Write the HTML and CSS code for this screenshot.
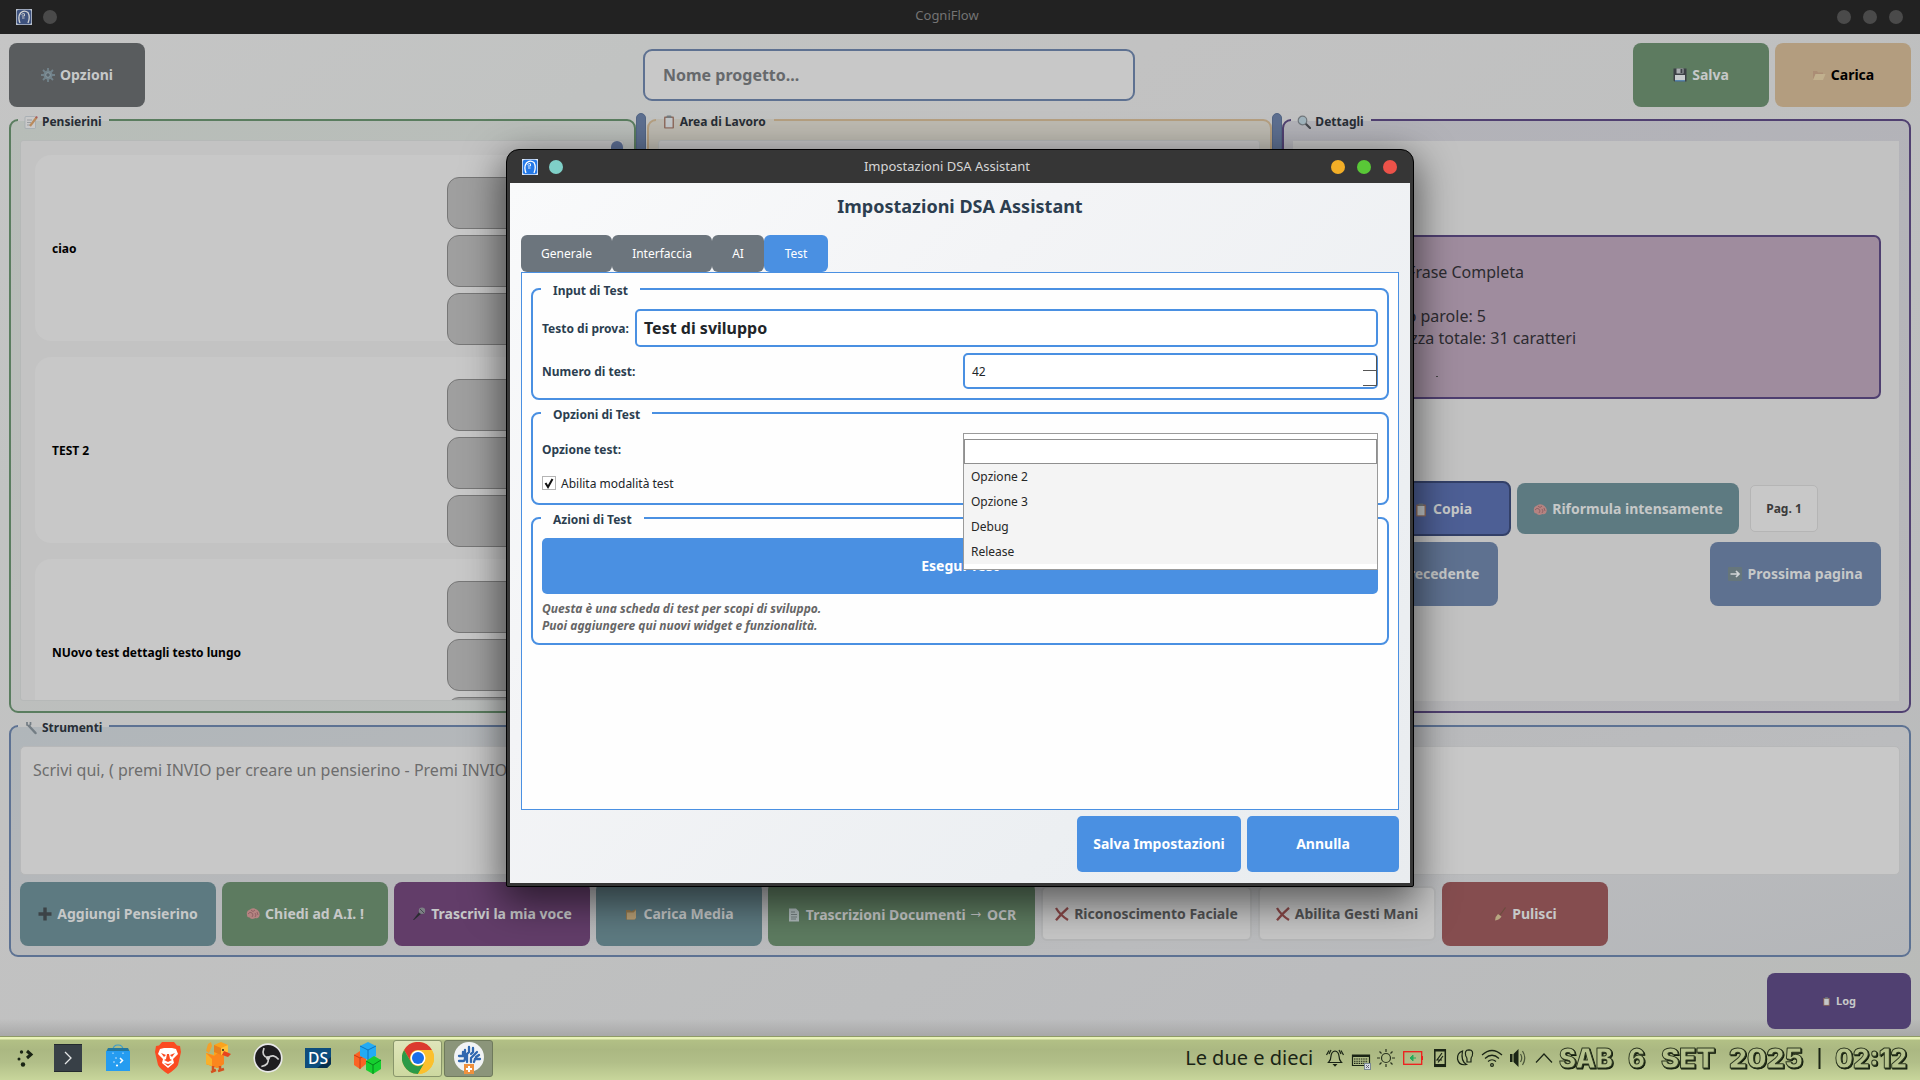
FILE: index.html
```html
<!DOCTYPE html>
<html lang="it">
<head>
<meta charset="utf-8">
<title>CogniFlow</title>
<link rel="stylesheet" href="styles.css">
</head>
<body>
<svg class="defs" aria-hidden="true">
  <symbol id="head" viewBox="0 0 16 16"><rect width="16" height="16" fill="#dfe9f8"/><rect x=".8" y=".8" width="14.400" height="14.400" rx="2" fill="currentColor"/><path d="M4 14Q1.500 8 4.500 4Q8 .5 12 3.500Q14.500 8 12 14" fill="none" stroke="#fff" stroke-width="1.300"/><path d="M5.500 5.500Q7 4 8.500 4.800V7H5.800M6 9H8.500" stroke="#fff" stroke-width=".9" fill="none"/></symbol>
  <symbol id="gear" viewBox="0 0 14 14"><g stroke="#72838b" stroke-width="1.800"><path d="M7 0V14M0 7H14M2 2L12 12M12 2L2 12"/></g><circle cx="7" cy="7" r="4.500" fill="#72838b"/><circle cx="7" cy="7" r="2.300" fill="#59636a" stroke="#8a9aa1"/></symbol>
  <symbol id="note" viewBox="0 0 14 14"><rect x="1" y="1.500" width="10.500" height="12" rx="1" fill="#c9c9c9" stroke="#9da6ad" stroke-width=".7"/><path d="M3 5H8M3 7.500H7M3 10H6" stroke="#8d9297" stroke-width=".8"/><path d="M6 11L12.500 2.500" stroke="#b98b5d" stroke-width="2.200"/><path d="M12 3L13 1.500" stroke="#a95b5b" stroke-width="2.200"/></symbol>
  <symbol id="clip" viewBox="0 0 14 14"><rect x="2" y="1.500" width="10" height="12" rx="1" fill="#8f6c5e"/><rect x="3.500" y="3" width="7" height="9.300" fill="#c3c7c9"/><rect x="4.500" y=".5" width="5" height="2.500" rx="1" fill="#747b7f"/></symbol>
  <symbol id="lens" viewBox="0 0 14 14"><path d="M8 8L13 13" stroke="#45484d" stroke-width="2.200" stroke-linecap="round"/><circle cx="5.500" cy="5.500" r="4.300" fill="#a0b4bd" stroke="#71777c" stroke-width="1.200"/></symbol>
  <symbol id="floppy" viewBox="0 0 14 14"><path d="M.5.500H13.500V13.500H1.500L.5 12.500Z" fill="#3c4146"/><rect x="3.500" y=".5" width="7" height="5" fill="#a9adb0"/><rect x="7.500" y="1" width="2" height="4" fill="#3c4146"/><rect x="2" y="7" width="10" height="6" fill="#c8ccce"/><rect x="2" y="12" width="10" height="1.500" fill="#5a87ad"/></symbol>
  <symbol id="folderopen" viewBox="0 0 14 14"><path d="M1 12V3H5L6 4.500H11V6H4Z" fill="#ab8d75"/><path d="M3.500 6H13.500L11 12H1Z" fill="#c1b08e"/></symbol>
  <symbol id="folder" viewBox="0 0 14 14"><path d="M2 12.500V3H6L7 4.500L12 2V11L10.500 12.500Z" fill="#94794e"/><path d="M3 5.500H9.500L12 3V11L10.500 12.500H3Z" fill="#b9a076"/></symbol>
  <symbol id="brain" viewBox="0 0 14 14"><path d="M1 8Q0 4 4 2.500Q8 0 11.500 3Q15 6 13 10Q11 12 9.500 11Q5 13 3.500 10.500Q1 10.500 1 8Z" fill="#b58381"/><path d="M2 7Q4 4 6 6Q8 8 6 10M5 3Q7 6 9 3M9 6Q11 8 9 10M11 5L12 8" fill="none" stroke="#8b5f62" stroke-width=".9"/></symbol>
  <symbol id="arrow" viewBox="0 0 14 14"><rect width="14" height="14" rx="1" fill="#66767b"/><path d="M2.500 7H11M8 4L11 7L8 10" stroke="#d2d5d7" stroke-width="1.700" fill="none"/></symbol>
  <symbol id="wrench" viewBox="0 0 14 14"><path d="M5 5L11.500 12" stroke="#737d84" stroke-width="2.500" stroke-linecap="round"/><path d="M3 1V4L5 5L6.500 3.500V1M5 5" stroke="#737d84" stroke-width="1.700" fill="none"/></symbol>
  <symbol id="plus" viewBox="0 0 14 14"><path d="M7 .5V13.500M.5 7H13.500" stroke="#3c4347" stroke-width="3.400"/></symbol>
  <symbol id="mic" viewBox="0 0 14 14"><path d="M1 13L8 4L10 6L2 13Z" fill="#292c30"/><circle cx="10" cy="3.700" r="3.200" fill="#7c7f84"/><path d="M8 2L12 6" stroke="#464950"/></symbol>
  <symbol id="page" viewBox="0 0 14 14"><path d="M2 .5H9L12 3.500V13.500H2Z" fill="#aebabb"/><path d="M4 4H8M4 6.500H10M4 9H10M4 11H9" stroke="#6d787b" stroke-width=".9"/></symbol>
  <symbol id="cross" viewBox="0 0 14 14"><path d="M1 1Q5 8 13 13M13 .8Q7 6 1 13.200" stroke="#8a4848" stroke-width="2.300" fill="none"/></symbol>
  <symbol id="broom" viewBox="0 0 14 14"><path d="M12.500 .5L7 8" stroke="#6a4d3d" stroke-width="1.200"/><path d="M5 7L8.500 9.500Q6.500 13 2 13.500Q2.500 9 5 7Z" fill="#b7a681"/></symbol>
</svg>

<header class="titlebar">
  <span class="tb-side"><svg class="appicon dim"><use href="#head"/></svg><i class="dot"></i></span>
  <span class="tb-title">CogniFlow</span>
  <span class="tb-side end"><i class="dot"></i><i class="dot"></i><i class="dot"></i></span>
</header>

<main class="app">
  <div class="toolbar">
    <button class="btn gray w136"><svg class="ic"><use href="#gear"/></svg>Opzioni</button>
    <div class="project">Nome progetto...</div>
    <div class="pair">
      <button class="btn green w136"><svg class="ic"><use href="#floppy"/></svg>Salva</button>
      <button class="btn sand w136"><svg class="ic"><use href="#folderopen"/></svg>Carica</button>
    </div>
  </div>

  <div class="columns">
    <fieldset class="panel pensierini">
      <legend><svg class="ic"><use href="#note"/></svg>Pensierini</legend>
      <div class="scroll">
        <div class="cards">
          <article class="card"><p>ciao</p><div class="acts"><b></b><b></b><b></b></div></article>
          <article class="card"><p>TEST 2</p><div class="acts"><b></b><b></b><b></b></div></article>
          <article class="card"><p>NUovo test dettagli testo lungo</p><div class="acts"><b></b><b></b><b></b></div></article>
        </div>
        <div class="handle"></div>
      </div>
    </fieldset>
    <div class="splitter"></div>
    <fieldset class="panel lavoro">
      <legend><svg class="ic"><use href="#clip"/></svg>Area di Lavoro</legend>
      <div class="scroll"></div>
    </fieldset>
    <div class="splitter"></div>
    <fieldset class="panel dettagli">
      <legend><svg class="ic"><use href="#lens"/></svg>Dettagli</legend>
      <div class="details">
        <div class="info">
          <p class="l1">Frase Completa</p>
          <p class="l2">Numero parole: 5</p>
          <p class="l3">Lunghezza totale: 31 caratteri</p>
          <i class="speck"></i>
        </div>
        <div class="row1">
          <button class="btn copy"><svg class="ic"><use href="#clip"/></svg>Copia</button>
          <button class="btn teal rif"><svg class="ic"><use href="#brain"/></svg>Riformula intensamente</button>
          <span class="pag">Pag. 1</span>
        </div>
        <div class="row2">
          <button class="btn blue prev">Pagina precedente</button>
          <button class="btn blue next"><svg class="ic"><use href="#arrow"/></svg>Prossima pagina</button>
        </div>
      </div>
    </fieldset>
  </div>

  <fieldset class="panel strumenti">
    <legend><svg class="ic"><use href="#wrench"/></svg>Strumenti</legend>
    <div class="compose">Scrivi qui, ( premi INVIO per creare un pensierino - Premi INVIO</div>
    <div class="tools">
      <button class="btn teal w196"><svg class="ic"><use href="#plus"/></svg>Aggiungi Pensierino</button>
      <button class="btn green w166"><svg class="ic"><use href="#brain"/></svg>Chiedi ad A.I. !</button>
      <button class="btn purple w196"><svg class="ic"><use href="#mic"/></svg>Trascrivi la mia voce</button>
      <button class="btn teal w166"><svg class="ic"><use href="#folder"/></svg>Carica Media</button>
      <button class="btn green w267 ocr"><svg class="ic"><use href="#page"/></svg><span>Trascrizioni Documenti <span class="to">→</span> OCR</span></button>
      <button class="btn toggle w211"><svg class="ic"><use href="#cross"/></svg>Riconoscimento Faciale</button>
      <button class="btn toggle w178"><svg class="ic"><use href="#cross"/></svg>Abilita Gesti Mani</button>
      <button class="btn red w166"><svg class="ic"><use href="#broom"/></svg>Pulisci</button>
    </div>
  </fieldset>
  <div class="logrow"><button class="btn log"><svg class="ic small"><use href="#clip"/></svg>Log</button></div>
</main>

<section class="dialog">
  <header class="titlebar dlg">
    <span class="tb-side"><svg class="appicon"><use href="#head"/></svg><i class="dot aqua"></i></span>
    <span class="tb-title">Impostazioni DSA Assistant</span>
    <span class="tb-side end"><i class="dot yellow"></i><i class="dot lime"></i><i class="dot coral"></i></span>
  </header>
  <div class="dbody">
    <h1>Impostazioni DSA Assistant</h1>
    <nav class="tabs"><span class="tab t1">Generale</span><span class="tab t2">Interfaccia</span><span class="tab t3">AI</span><span class="tab t4 on">Test</span></nav>
    <div class="pane">
      <fieldset class="grp g1">
        <legend>Input di Test</legend>
        <div class="frow"><label>Testo di prova:</label><div class="field text">Test di sviluppo</div></div>
        <div class="frow"><label>Numero di test:</label><div class="field spin">42<span class="steps"><i></i><i></i></span></div></div>
      </fieldset>
      <fieldset class="grp g2">
        <legend>Opzioni di Test</legend>
        <div class="frow opt"><label>Opzione test:</label>
          <div class="anchor">
            <div class="popup"><div class="sel"></div><ul><li>Opzione 2</li><li>Opzione 3</li><li>Debug</li><li>Release</li></ul></div>
          </div>
        </div>
        <div class="check"><svg viewBox="0 0 14 14" class="box"><rect x=".5" y=".5" width="13" height="13" fill="#fff" stroke="#b4b4b4"/><path d="M3.500 7L6 11L10.500 3" fill="none" stroke="#111" stroke-width="2"/></svg>Abilita modalità test</div>
      </fieldset>
      <fieldset class="grp g3">
        <legend>Azioni di Test</legend>
        <button class="btn azure run">Esegui Test</button>
        <p class="hint">Questa è una scheda di test per scopi di sviluppo.<br>Puoi aggiungere qui nuovi widget e funzionalità.</p>
      </fieldset>
    </div>
    <div class="dbuttons"><button class="btn azure save">Salva Impostazioni</button><button class="btn azure cancel">Annulla</button></div>
  </div>
</section>

<footer class="taskbar">
  <div class="launch">
    <span class="slot"><svg width="18" height="18" viewBox="0 0 18 18"><path d="M10 4L14 7.500L10 11" transform="translate(0 -2)" fill="none" stroke="#1a2415" stroke-width="3"/><circle cx="4.500" cy="3" r="1.700" fill="#1a2415"/><circle cx="2" cy="10" r="1.500" fill="#1a2415"/><circle cx="6" cy="15.500" r="2.200" fill="#1a2415"/></svg></span>
    <span class="slot"><svg width="28" height="28" viewBox="0 0 28 28"><rect width="28" height="28" fill="#384047"/><path d="M0 .5H28M0 27.500H28" stroke="#242a2e"/><path d="M11 8L17 14L11 20" fill="none" stroke="#e4e6e7" stroke-width="1.300"/></svg></span>
    <span class="slot"><svg width="26" height="28" viewBox="0 0 26 28"><path d="M8 6Q8 1 13 1Q18 1 18 6" fill="none" stroke="#3a9ccb" stroke-width="1.200"/><path d="M3 4H23L25 8H1Z" fill="#23779f"/><rect x="1" y="7" width="24" height="20" fill="#259cf0"/><path d="M15 14L17.500 16.500L15 19" stroke="#fff" stroke-width="1.500" fill="none"/><circle cx="11" cy="14" r=".7" fill="#fff"/><circle cx="9" cy="18" r=".7" fill="#fff"/><circle cx="12" cy="21.500" r="1.100" fill="#fff"/><path d="M8 8.500V10M18 8.500V10" stroke="#8accf8" stroke-width="1.500"/></svg></span>
    <span class="slot"><svg width="28" height="32" viewBox="0 0 28 32"><path d="M8 0H20L23 3.500L26 4L27 10L24 23Q22 27 14 32Q6 27 4 23L1 10L2 4L5 3.500Z" fill="#fb4b22"/><path d="M6 7L10 6H18L22 7L24 12L19 17L20 21L14 26L8 21L9 17L4 12Z" fill="#fff"/><path d="M7 11L12 13L10 15ZM21 11L16 13L18 15ZM13 12H15L16 17L18 18L14 20L10 18L12 17ZM10 21L14 22L18 21L14 24Z" fill="#fb4b22"/></svg></span>
    <span class="slot"><svg width="28" height="32" viewBox="0 0 28 32"><path d="M10 3L17 0L24 3V10L20 13V22L14 26L2 22V11L10 13Z" fill="#fba31c"/><path d="M2 11L10 14L14 11L20 14V22L13 26L2 22Z" fill="#fb861e"/><path d="M2 11L8 17V24L2 22Z" fill="#f9b02a"/><path d="M10 3L17 6V13L10 10Z" fill="#e8801c"/><path d="M17 6L24 3V10L17 13Z" fill="#ffc13a"/><path d="M20 9L27 12L24 15L18 13Z" fill="#e8431e"/><circle cx="19" cy="8" r="1" fill="#222"/><path d="M4 2L7 0L8 4L5 11L2 9Z" fill="#f2a12c"/><path d="M9 24V30M16 24V29M7 30L12 28M14 29L20 27" stroke="#d4511e" stroke-width="2.500"/></svg></span>
    <span class="slot"><svg width="30" height="30" viewBox="0 0 30 30"><circle cx="15" cy="15" r="13.800" fill="#1e1d20" stroke="#e8e8e8" stroke-width="1.700"/><g fill="none" stroke="#cfcfcf" stroke-width="1.700"><path d="M15 15Q8 13 11 5"/><path d="M15 15Q8 13 11 5" transform="rotate(120 15 15)"/><path d="M15 15Q8 13 11 5" transform="rotate(240 15 15)"/></g><circle cx="15" cy="15" r="2" fill="#cfcfcf"/></svg></span>
    <span class="slot"><svg width="26" height="20" viewBox="0 0 26 20"><path d="M0 0H26V16L22 20H0Z" fill="#0d4d7d"/><path d="M0 20L12 20L26 9V16L22 20Z" fill="#07304f"/><text x="13" y="15.500" text-anchor="middle" font-family="Noto Sans" font-size="15.500" font-weight="500" fill="#fff" textLength="20" lengthAdjust="spacingAndGlyphs">DS</text></svg></span>
    <span class="slot"><svg width="28" height="32" viewBox="0 0 28 32"><path d="M0 13L6 9L12 13V22L6 27L0 23Z" fill="#fb6324"/><path d="M0 13L6 16L12 13M6 16V27" stroke="#c23d12" fill="none"/><path d="M6 4L14 0L22 4V14L14 18L6 14Z" fill="#22abf5"/><path d="M6 4L14 8L22 4M14 8V18" stroke="#1173bb" fill="none"/><path d="M12 19L20 14L27 18V27L19 32L12 28Z" fill="#15cf2f"/><path d="M12 19L19 23L27 18M19 23V32" stroke="#07841a" fill="none"/></svg></span>
    <span class="tile light"><svg width="32" height="32" viewBox="0 0 32 32"><circle cx="16" cy="16" r="16" fill="#fbc02d"/><path d="M2.100 8A16 16 0 0 1 29.900 8H16A8 8 0 0 0 9 20Z" fill="#db3a30"/><path d="M2.100 8A16 16 0 0 0 16 32L23 20A8 8 0 0 1 9 20Z" fill="#2b9a48"/><path d="M16 32A16 16 0 0 0 29.900 8H16A8 8 0 0 1 23 20Z" fill="#fbc02d"/><circle cx="16" cy="16" r="7.500" fill="#fff"/><circle cx="16" cy="16" r="6" fill="#1a6fe8"/></svg></span>
    <span class="tile dark"><svg width="30" height="32" viewBox="0 0 30 32"><circle cx="15" cy="15" r="15" fill="#f1f3f5"/><g fill="none" stroke="#2f67b0" stroke-width="2.300" stroke-linecap="round"><path d="M5 14H9V10M5 19H9Q11 19 11 16V8M15 5V10L13 12V20M17 12L19 10V6M17 20V16L20 13L23 10M20 20L21 17H26M22 15L25 13"/></g><rect x="10" y="22" width="10" height="10" fill="#ef913e"/><path d="M15 24V30M12 27H18" stroke="#fff" stroke-width="2"/></svg></span>
  </div>
  <span class="fuzzy">Le due e dieci</span>
  <div class="tray">
    <svg viewBox="0 0 18 18"><g fill="none" stroke="#1a2415" stroke-width="1.200"><path d="M2.500 13.500Q5 11 5 7Q5.500 2.500 9 2Q12.500 2.500 13 7Q13 11 15.500 13.500ZM3 1.500L.5 6M5 1L3 5M15 1.500L17.500 6M13 1L15 5"/></g><path d="M6.500 15H11.500L9 17.700Z" fill="#1a2415"/></svg>
    <svg viewBox="0 0 18 18"><path d="M.500 6H17.500V16.500H.500Z" fill="none" stroke="#1a2415" stroke-width="1.200"/><path d="M0 7H18" stroke="#1a2415" stroke-width="2"/><path d="M2 10H16M2 12.200H16M2 14.400H16" stroke="#1a2415" stroke-width="1.100" stroke-dasharray="1.500 .8"/><rect x="12.500" y="14.500" width="6" height="6" fill="#d6dde3" stroke="#7a8791"/><path d="M14 16L17 19M17 16L14 19" stroke="#667"/></svg>
    <svg viewBox="0 0 18 18"><g fill="none" stroke="#2a331f" stroke-width="1.200"><circle cx="9" cy="9" r="4.500"/><path d="M9 0V3M9 15V18M0 9H3M15 9H18M2.500 2.500L4.500 4.500M13.500 13.500L15.500 15.500M15.500 2.500L13.500 4.500M2.500 15.500L4.500 13.500"/></g></svg>
    <svg viewBox="0 0 20 18" class="wide"><rect x=".7" y="2.700" width="18" height="12.600" fill="none" stroke="#f01c1c" stroke-width="1.300"/><rect x="18.500" y="7" width="1.500" height="4" fill="#f01c1c"/><path d="M7 9L10 6V12ZM9 9H13" fill="#22ad5a" stroke="#22ad5a"/></svg>
    <svg viewBox="0 0 18 18"><rect x="3.800" y=".8" width="10.500" height="16.500" fill="none" stroke="#1a2415" stroke-width="1.500"/><path d="M3 1.500H15M3 16H15" stroke="#1a2415" stroke-width="2"/><path d="M11 4L6 11H11M7 13.500L12 7" stroke="#1a2415" fill="none" stroke-width="1.200"/></svg>
    <svg viewBox="0 0 18 18"><g fill="none" stroke="#1a2415" stroke-width="1.200"><path d="M6.500 2Q1 4 1.500 10Q3 17 10.500 15.500Q4.500 12 6.500 2Z"/><path d="M11 10Q11 8.500 9.800 7Q8 1 13 .8Q18 1 16.200 7Q15 8.500 15 10V13H11Z"/></g></svg>
    <svg viewBox="0 0 20 18" class="wide"><g fill="none" stroke="#1a2415" stroke-width="1.200"><path d="M0 6Q10-3 20 6M3 9.500Q10 3 17 9.500M6 12.500Q10 9 14 12.500"/><circle cx="10" cy="16" r="1.400"/></g></svg>
    <svg viewBox="0 0 18 18"><rect x="1" y="5" width="2.500" height="8" fill="#1a2415"/><path d="M4.500 5L9.500 0V18L4.500 13Z" fill="#1a2415"/><path d="M11.500 5Q14 9 11.500 13M13.500 2Q18 9 13.500 16" fill="none" stroke="#4b5639" stroke-width="1.200"/></svg>
    <svg viewBox="0 0 18 18"><path d="M1 13.500L9 5L17 13.500" fill="none" stroke="#1a2415" stroke-width="1.200"/></svg>
  </div>
  <svg class="clock" width="354" height="30" viewBox="0 0 354 30">
    <text x="2" y="24.500" textLength="54" lengthAdjust="spacingAndGlyphs">SAB</text><text x="71" y="24.500" textLength="17" lengthAdjust="spacingAndGlyphs">6</text><text x="104" y="24.500" textLength="54" lengthAdjust="spacingAndGlyphs">SET</text><text x="172" y="24.500" textLength="74" lengthAdjust="spacingAndGlyphs">2025</text><path class="bar" d="M262.500 5V26"/><text x="278" y="24.500" textLength="72" lengthAdjust="spacingAndGlyphs">02:12</text></svg>
</footer>
</body>
</html>
```
FILE: styles.css
```css
* { box-sizing: border-box; }
body {
  margin: 0; width: 1920px; height: 1080px; overflow: hidden; position: relative;
  display: flex; flex-direction: column;
  font-family: "Noto Sans", sans-serif; font-size: 12px; color: #262b31;
}
p, h1, ul { margin: 0; padding: 0; }
.defs { position: absolute; width: 0; height: 0; }
button { font-family: inherit; border: 0; padding: 0; }
fieldset { margin: 0; padding: 0; border: 0; min-width: 0; }

/* Window title bars */
.titlebar {
  height: 34px; flex: none; padding: 0 17px 1px 16px; background: #222; color: #747474;
  display: flex; align-items: center; font-size: 13px;
}
.tb-side { width: 100px; display: flex; align-items: center; gap: 11px; }
.tb-side.end { justify-content: flex-end; gap: 12px; }
.tb-title { flex: 1; text-align: center; padding: 0 25px 3px 0; }
.appicon { width: 16px; height: 16px; color: #2479e8; }
.appicon.dim { color: #455f96; opacity: .8; }
.dot { width: 14px; height: 14px; border-radius: 50%; background: #4a4a4a; }
.dot.aqua { background: #7fd0c8; }
.dot.yellow { background: #f2ae27; }
.dot.lime { background: #59c837; }
.dot.coral { background: #ec5249; }

/* Main window */
.app {
  height: 1002px; flex: none; padding: 9px 9px 0; display: flex; flex-direction: column;
  background: linear-gradient(180deg, transparent 985px, #a8a8a8), linear-gradient(145deg, #c5c5c5, #c1c3c2 20%, #c2c2c2 35%, #bfc0c0 55%, #bbbcbe 80%, #b9bbb8);
}
.toolbar { height: 64px; display: flex; justify-content: space-between; align-items: center; }
.btn {
  height: 64px; border-radius: 8px; color: #c6c8c8; font-weight: 700; font-size: 14px; padding-bottom: 2px;
  display: flex; align-items: center; justify-content: center; gap: 5px; white-space: nowrap; flex: none;
}
.ic { width: 14px; height: 14px; flex: none; }
.btn .ic { position: relative; top: 1px; }
.ic.small { width: 9px; height: 9px; }
.w136 { width: 136px; } .w166 { width: 166px; } .w178 { width: 178px; }
.w196 { width: 196px; } .w211 { width: 211px; } .w267 { width: 267px; }
.gray { background: #595c5e; } .green { background: #5d7b60; }
.sand { background: #b39d7f; color: #000; } .teal { background: #5d7a81; }
.blue { background: #5e7190; } .purple { background: #623d69; } .red { background: #854d4f; }
.project {
  width: 492px; height: 52px; border: 2px solid #5e7191; border-radius: 9px;
  background: #c8c8c8; color: #66696c; font-size: 16px; font-weight: 700; padding: 0 18px;
  display: flex; align-items: center;
}
.pair { display: flex; gap: 6px; }
.ocr { padding-bottom: 0; }
.to { display: inline-block; transform: translateY(-5px) scale(1.15, 1.5); }

.columns { height: 600px; margin-top: 6px; display: flex; }
.splitter { width: 10px; flex: none; border-radius: 5px; border: 1px solid #526585; background: #5d6f90; }
.panel { border: 2px solid; border-radius: 9px; padding: 14px 10px 10px 9px; }
.panel legend {
  height: 14px; margin-left: -2px; padding: 4px 7px 0 6px; line-height: 10px; font-weight: 700; font-size: 12px;
  display: flex; align-items: center; gap: 4px; color: #272d35;
}
.pensierini { width: 627px; border-color: #5a7d5f; background: linear-gradient(160deg, #b7bdb8, #bdbfbd 60%, #bbbebd); }
.lavoro { width: 626px; border-color: #b59f80; background: #bdbab1; margin-left: 1px; }
.panel.lavoro legend { padding: 4px 8px 0 6px; gap: 4px; }
.dettagli { width: 629px; border-color: #504071; background: linear-gradient(170deg, #b2b2b8, #b9b9bb); }
.scroll { height: 561px; margin-top: -1px; display: flex; background: #c3c3c3; border: 1px solid #b6b9b8; border-radius: 3px; overflow: hidden; }
.cards { flex: 1; padding: 14px 0 0 14px; display: flex; flex-direction: column; gap: 16px; }
.card { height: 186px; flex: none; border-radius: 16px; background: #c8c8c8; padding-left: 17px; display: flex; align-items: center; }
.card p { flex: 1; font-weight: 700; color: #000; font-size: 12px; }
.acts { width: 164px; height: 168px; margin-top: 26px; display: flex; flex-direction: column; gap: 6px; }
.acts b { height: 52px; flex: none; border: 1px solid #777; border-radius: 12px; background: #9f9f9f; }
.handle { width: 12px; height: 60px; border-radius: 6px; background: #5b6d92; }

.details { height: 560px; background: #c2c2c2; padding: 94px 18px 0 18px; }
.info {
  height: 164px; border: 2px solid #4f3f70; border-radius: 7px; background: #9f8c9e; color: #2c2b30;
  font-size: 16px; line-height: 22px; text-align: right; position: relative; padding-top: 24px;
}
.l1 { padding-right: 355px; margin-bottom: 22px; }
.l2 { padding-right: 393px; }
.l3 { padding-right: 303px; }
.speck { position: absolute; right: 441px; top: 139px; width: 2px; height: 1px; background: #444; }
.row1 { margin-top: 82px; height: 55px; padding-right: 63px; display: flex; align-items: center; justify-content: flex-end; }
.row1 .btn { height: 51px; padding-bottom: 0; }
.row1 .copy { height: 55px; width: 136px; background: #4d5f95; border: 2px solid #334068; margin-right: 6px; }
.rif { width: 222px; }
.pag { width: 68px; height: 47px; margin-left: 11px; border: 1px solid #b5b5b5; border-radius: 5px; background: #c8c8c8; color: #3b3b3b; font-weight: 700; font-size: 12px; display: flex; align-items: center; justify-content: center; }
.row2 { margin-top: 6px; display: flex; justify-content: space-between; }
.prev { width: 187px; justify-content: flex-end; padding-right: 19px; }
.next { width: 171px; }

.strumenti { height: 238px; margin-top: 6px; padding: 13px 9px 9px; border-color: #5d7293; background: linear-gradient(165deg, #b0b6ba, #b7b8ba 35%, #bbbcbe 70%, #b4b6b9); }
.compose { height: 129px; border: 1px solid #b7b8b9; border-radius: 5px; background: #c8c8c8; color: #6d6d6d; font-size: 16px; line-height: 22px; padding: 12px 12px; }
.tools { margin-top: 7px; display: flex; gap: 6px; }
.toggle { height: 55px; margin: 4px 0; border: 2px solid #b5b6b7; border-radius: 6px; background: #c6c6c6; color: #525354; gap: 5px; padding-bottom: 1px; }
.logrow { margin-top: 16px; display: flex; justify-content: flex-end; }
.log { width: 144px; height: 56px; background: #504071; font-size: 11px; }

/* Settings dialog */
.dialog {
  position: absolute; left: 506px; top: 149px; width: 908px; height: 738px;
  border: 1px solid #000; border-radius: 13px 13px 2px 2px; background: #363636;
  box-shadow: 0 12px 38px 4px rgba(0,0,0,.55); padding: 0 3px 3px;
}
.titlebar.dlg { height: 33px; padding: 1px 13px 0 12px; background: transparent; color: #d6d6d6; }
.dbody { height: 700px; padding: 11px 11px 11px; background: linear-gradient(135deg, #f9fafb, #f3f4f6 35%, #eceff2 75%, #e9ecef); display: flex; flex-direction: column; }
h1 { height: 24px; line-height: 24px; text-align: center; font-size: 18px; color: #2c3e50; }
.tabs { height: 37px; margin-top: 17px; display: flex; }
.tab { border-radius: 6px; background: #6c757d; color: #fff; display: flex; align-items: center; justify-content: center; }
.tab.on { background: #4a90e2; }
.t1 { width: 91px; } .t2 { width: 100px; } .t3 { width: 52px; } .t4 { width: 64px; }
.pane { height: 538px; border: 1px solid #4a90e2; background: #fefefe; padding: 9px; display: flex; flex-direction: column; gap: 6px; }
.grp { border: 2px solid #4a90e2; border-radius: 8px; padding: 13px 9px 0; color: #2c3e50; }
.grp legend { height: 14px; line-height: 10px; padding: 4px 12px 0; margin-left: -1px; font-weight: 700; font-size: 12px; }
.g1 { height: 118px; } .g2 { height: 99px; } .g3 { height: 134px; }
.frow { display: flex; align-items: center; justify-content: space-between; }
.frow + .frow { margin-top: 6px; }
.frow label { font-weight: 700; }
.field { border: 2px solid #4a90e2; border-radius: 5px; background: #fff; color: #212529; display: flex; align-items: center; padding-left: 7px; }
.text { width: 743px; height: 38px; font-size: 16px; font-weight: 700; }
.spin { width: 415px; height: 36px; justify-content: space-between; }
.steps { margin-right: -1px; }
.steps i { display: block; width: 14px; height: 15px; border-right: 1px solid #555; border-bottom: 1px solid #555; }
.opt { height: 32px; }
.anchor { width: 415px; height: 32px; position: relative; }
.popup { position: absolute; z-index: 2; left: 0; top: 0; width: 415px; height: 137px; border: 1px solid #9a9a9a; background: #fff; padding-top: 5px; }
.sel { height: 25px; border: 1px solid #8f8f8f; }
.popup ul { list-style: none; background: #f4f4f4; color: #262626; }
.popup li { height: 25px; line-height: 25px; padding-left: 7px; }
.check { display: flex; align-items: center; height: 18px; margin-top: 9px; gap: 5px; color: #212529; }
.box { width: 14px; height: 14px; }
.azure { background: #4a90e2; color: #fff; border-radius: 5px; height: 56px; }
.run { width: 100%; }
.hint { margin-top: 6px; font-weight: 700; font-style: italic; line-height: 17px; color: #666; }
.dbuttons { margin-top: 6px; display: flex; justify-content: flex-end; gap: 6px; }
.save { width: 164px; } .cancel { width: 152px; }

/* Taskbar */
.taskbar {
  height: 44px; flex: none; display: flex; align-items: center; position: relative;
  background: linear-gradient(180deg, #8e9a66 0 1px, #e8f2b6 1px 3px, #b2c085 4px, #abb882 14px, #b1be88 26px, #c8d69b 44px);
}
.launch { display: flex; align-items: center; height: 44px; }
.slot { width: 50px; display: flex; justify-content: center; align-items: center; }
.slot:first-child { width: 43px; padding-left: 8px; }
.tile { width: 49px; height: 37px; margin-right: 2px; border: 1px solid #88956a; border-radius: 3px; display: flex; align-items: center; justify-content: center; }
.tile.light { background: linear-gradient(#dfe5ba, #cdd8a0); }
.tile.dark { background: #8b957a; border-color: #6f7a5c; }
.fuzzy { margin-left: auto; padding-bottom: 2px; font-size: 20px; color: #1a2415; white-space: nowrap; }
.tray { display: flex; align-items: center; margin-left: 13px; gap: 7.6px; }
.tray svg { width: 18px; height: 18px; overflow: visible; }
.tray .wide { width: 20px; }
.clock { margin: 0 9px 0 4px; font-family: "Inter", "Liberation Sans", sans-serif; font-weight: 900; font-size: 27px; }
.clock text { fill: #b6c38d; stroke: #2f3a22; stroke-width: 1; stroke-linejoin: round; filter: drop-shadow(1px 1px 0 #111b0c); }
.clock .bar { fill: none; stroke: #1a2415; stroke-width: 2; }
```
